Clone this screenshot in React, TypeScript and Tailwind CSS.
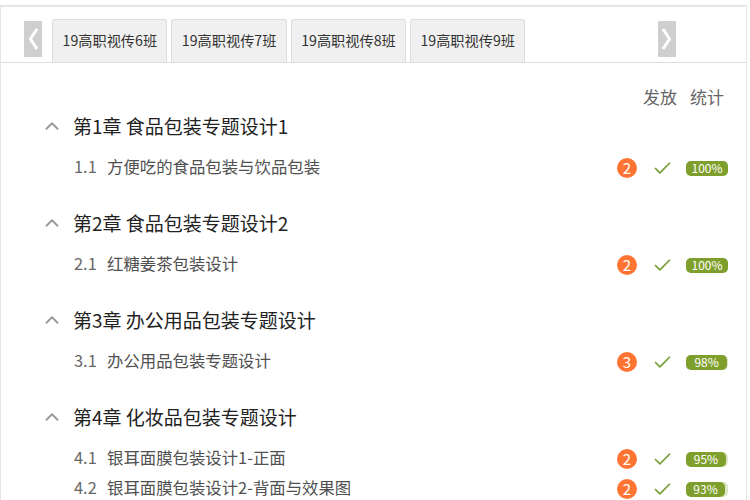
import { ChevronUp, Check } from "lucide-react";

const tabs = ["19高职视传6班", "19高职视传7班", "19高职视传8班", "19高职视传9班"];

const chapters = [
  {
    title: "第1章 食品包装专题设计1",
    lessons: [{ no: "1.1", name: "方便吃的食品包装与饮品包装", count: 2, pct: 100 }],
  },
  {
    title: "第2章 食品包装专题设计2",
    lessons: [{ no: "2.1", name: "红糖姜茶包装设计", count: 2, pct: 100 }],
  },
  {
    title: "第3章 办公用品包装专题设计",
    lessons: [{ no: "3.1", name: "办公用品包装专题设计", count: 3, pct: 98 }],
  },
  {
    title: "第4章 化妆品包装专题设计",
    lessons: [
      { no: "4.1", name: "银耳面膜包装设计1-正面", count: 2, pct: 95 },
      { no: "4.2", name: "银耳面膜包装设计2-背面与效果图", count: 2, pct: 93 },
    ],
  },
];

function Arrow({ dir }: { dir: "left" | "right" }) {
  return (
    <div className="w-[18px] h-[36px] bg-[#cfcfcf] flex items-center justify-center">
      <svg width="12" height="24" viewBox="0 0 12 24" fill="none">
        <path
          d={dir === "left" ? "M10 2 L3.5 12 L10 22" : "M2 2 L8.5 12 L2 22"}
          stroke="#ffffff"
          strokeWidth="3"
        />
      </svg>
    </div>
  );
}

function Lesson({ no, name, count, pct }: { no: string; name: string; count: number; pct: number }) {
  return (
    <div className="h-[30px] flex items-center pl-[73px] pr-[18px]">
      <span className="w-[33px] mb-[4px] text-[16.4px] text-[#666666]">{no}</span>
      <span className="flex-1 mb-[4px] text-[16.4px] text-[#505050]">{name}</span>
      <span className="w-5 h-5 rounded-full bg-[#ff7433] text-white text-[15px] flex items-center justify-center">
        {count}
      </span>
      <Check className="ml-[15px] text-[#7a9e3a]" size={21} strokeWidth={2} />
      <div className="ml-[13px] w-[42px] h-[15px] rounded-[5px] bg-[#dfe6c8]">
        <div
          className="h-full rounded-[5px] bg-[#7f9f2d] text-white text-[12px] leading-[14px] text-center whitespace-nowrap"
          style={{ width: `${pct}%` }}
        >
          {pct}%
        </div>
      </div>
    </div>
  );
}

export default function App() {
  return (
    <div className="w-[750px] h-[500px] overflow-hidden bg-white pt-[5px] font-['Noto_Sans_CJK_SC','Liberation_Sans',sans-serif]">
      <div className="w-[747px] h-[600px] border-t-2 border-x border-[#e5e5e5]">
        {/* tab bar */}
        <div className="h-[56px] flex items-end border-b border-[#dddddd] pl-[23px]">
          <div className="self-center mt-[9px]">
            <Arrow dir="left" />
          </div>
          <div className="flex gap-[4px] ml-[10.2px]">
            {tabs.map((tab) => (
              <div
                key={tab}
                className="w-[115.3px] h-[43px] bg-[#f0f0f0] border border-b-0 border-[#dcdcdc] rounded-t-[3px] text-[14.2px] text-[#333333] flex items-center justify-center"
              >
                {tab}
              </div>
            ))}
          </div>
          <div className="self-center ml-[132.6px] mt-[9px]">
            <Arrow dir="right" />
          </div>
        </div>

        {/* header */}
        <div className="flex justify-end gap-[13px] pr-[22px] pt-[20px] h-[25px] box-content text-[17px] leading-[28px] text-[#666666]">
          <span>发放</span>
          <span>统计</span>
        </div>

        {/* chapters */}
        <div className="flex flex-col">
          {chapters.map((c) => (
            <div key={c.title} className="h-[97px] last:h-auto">
              <div className="h-[36px] flex items-center pl-[40px]">
                <ChevronUp className="text-[#999999]" size={22} strokeWidth={2} />
                <span className="ml-[10px] text-[19px] text-[#222222]">{c.title}</span>
              </div>
              <div className="mt-[9px]">
                {c.lessons.map((l) => (
                  <Lesson key={l.no} {...l} />
                ))}
              </div>
            </div>
          ))}
        </div>
      </div>
    </div>
  );
}
